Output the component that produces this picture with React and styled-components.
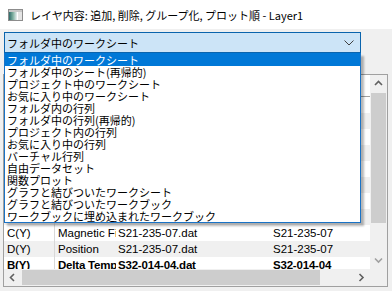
import React from "react";
import styled, { createGlobalStyle } from "styled-components";

const GlobalStyle = createGlobalStyle`
  html, body {
    margin: 0;
    padding: 0;
    background: #f0f0f0;
  }
  body {
    font-family: "Noto Sans CJK JP", "Liberation Sans", sans-serif;
    overflow: hidden;
  }
`;

const options = [
  "フォルダ中のワークシート",
  "フォルダ中のシート(再帰的)",
  "プロジェクト中のワークシート",
  "お気に入り中のワークシート",
  "フォルダ内の行列",
  "フォルダ中の行列(再帰的)",
  "プロジェクト内の行列",
  "お気に入り中の行列",
  "バーチャル行列",
  "自由データセット",
  "関数プロット",
  "グラフと結びついたワークシート",
  "グラフと結びついたワークブック",
  "ワークブックに埋め込まれたワークブック",
];

const rows = [
  ["A(X)", "Time", "S21-235-05.dat", "S21-235-05"],
  ["B(Y)", "Delta Temp", "S21-235-05.dat", "S21-235-05"],
  ["C(Y)", "Magnetic Field", "S21-235-05.dat", "S21-235-05"],
  ["D(Y)", "Position", "S21-235-05.dat", "S21-235-05"],
  ["A(X)", "Time", "S21-235-06.dat", "S21-235-06"],
  ["B(Y)", "Delta Temp", "S21-235-06.dat", "S21-235-06"],
  ["A(X)", "Time", "S21-235-07.dat", "S21-235-07"],
  ["B(Y)", "Delta Temp", "S21-235-07.dat", "S21-235-07"],
  ["C(Y)", "Magnetic Field", "S21-235-07.dat", "S21-235-07"],
  ["D(Y)", "Position", "S21-235-07.dat", "S21-235-07"],
  ["B(Y)", "Delta Temp", "S32-014-04.dat", "S32-014-04", true],
];

const Window = styled.div`
  width: 392px;
  height: 291px;
  display: flex;
  flex-direction: column;
`;

const TitleBar = styled.div`
  height: 29px;
  background: #ffffff;
  display: flex;
  align-items: center;
  gap: 7px;
  padding-left: 8px;
  font-size: 11px;
  color: #000;
`;

const Body = styled.div`
  flex: 1;
  display: flex;
  flex-direction: column;
  padding: 3px 3px 0 3px;
  gap: 21px;
`;

const ComboWrap = styled.div`
  position: relative;
  margin: 0 28px 0 1px;
  z-index: 2;
`;

const Combo = styled.div`
  height: 19px;
  border: 1px solid #0a64ad;
  background: #cce4f7;
  display: flex;
  align-items: center;
  justify-content: space-between;
  padding: 0 6px 0 2px;
  font-size: 11px;
  color: #000;
`;

const DropList = styled.ul`
  position: absolute;
  top: 100%;
  left: 0;
  right: 0;
  margin: 0;
  padding: 0;
  list-style: none;
  background: #fff;
  border: 1px solid #1a73c6;
  border-top-color: #0078d7;
  box-shadow: 3px 3px 2px rgba(0, 0, 0, 0.28);
`;

const Option = styled.li`
  height: 12px;
  line-height: 12px;
  font-size: 11px;
  padding-left: 2px;
  white-space: nowrap;
  color: ${(p) => (p.$active ? "#fff" : "#000")};
  background: ${(p) => (p.$active ? "#0078d7" : "transparent")};
`;

const TableFrame = styled.div`
  height: 211px;
  margin-right: 1px;
  border: 1px solid #a0a0a0;
  background: #fff;
  display: grid;
  grid-template-columns: 1fr 17px;
  grid-template-rows: 1fr 17px;
`;

const Viewport = styled.div`
  overflow: hidden;
  font-family: "Liberation Sans", "Noto Sans CJK JP", sans-serif;
  font-size: 11.5px;
`;

const Header = styled.div`
  height: 21px;
  border-bottom: 1px solid #a0a0a0;
  background: #fff;
`;

const Row = styled.div`
  height: 16px;
  display: grid;
  grid-template-columns: 51px 61px 155px 1fr;
  align-items: center;
  background: ${(p) => (p.$alt ? "#f0f0f0" : "#fff")};
  font-weight: ${(p) => (p.$bold ? 700 : 400)};
  letter-spacing: ${(p) => (p.$bold ? "-0.2px" : "0")};
  color: #000;
`;

const Cell = styled.div`
  height: 16px;
  line-height: 16px;
  padding-left: ${(p) => p.$pad || 3}px;
  white-space: nowrap;
  overflow: hidden;
  border-right: ${(p) => (p.$divider ? "1px solid #d8d8d8" : "none")};
`;

const VScroll = styled.div`
  background: #f0f0f0;
  display: flex;
  flex-direction: column;
`;

const HScroll = styled.div`
  background: #f0f0f0;
  display: flex;
  align-items: center;
`;

const Arrow = styled.div`
  width: 17px;
  height: 17px;
  flex: none;
  display: flex;
  align-items: center;
  justify-content: center;
`;

const VThumb = styled.div`
  height: 130px;
  margin: 1px 1px 0 1px;
  background: #cdcdcd;
`;

const Track = styled.div`
  flex: 1;
`;

const HThumb = styled.div`
  width: 298px;
  height: 15px;
  margin-left: 1px;
  background: #cdcdcd;
`;

const Corner = styled.div`
  background: #f0f0f0;
`;

const Chevron = ({ dir, color = "#606060" }) => {
  const pts = {
    up: "1,5 4.5,1.5 8,5",
    down: "1,1.5 4.5,5 8,1.5",
    left: "5,1 1.5,4.5 5,8",
    right: "1.5,1 5,4.5 1.5,8",
  }[dir];
  const horiz = dir === "left" || dir === "right";
  return (
    <svg width={horiz ? 7 : 9} height={horiz ? 9 : 7} viewBox={horiz ? "0 0 7 9" : "0 0 9 7"}>
      <polyline points={pts} fill="none" stroke={color} strokeWidth="1.6" />
    </svg>
  );
};

const AppIcon = () => (
  <svg width="15" height="12" viewBox="0 0 15 12">
    <defs>
      <linearGradient id="ig" x1="0" y1="0" x2="1" y2="0">
        <stop offset="0" stopColor="#2f6a6a" />
        <stop offset="0.5" stopColor="#7fb0a0" />
        <stop offset="1" stopColor="#e8eef0" />
      </linearGradient>
    </defs>
    <rect x="0.5" y="0.5" width="14" height="11" fill="#fff" stroke="#8c8c8c" />
    <rect x="1" y="1" width="13" height="2" fill="#c8c8c8" />
    <rect x="1" y="3" width="8" height="8" fill="url(#ig)" />
    <rect x="10" y="3" width="4" height="8" fill="#e4e4e4" />
  </svg>
);

export default function App() {
  return (
    <Window>
      <GlobalStyle />
      <TitleBar>
        <AppIcon />
        <span>レイヤ内容: 追加, 削除, グループ化, プロット順 - Layer1</span>
      </TitleBar>
      <Body>
        <ComboWrap>
          <Combo>
            <span>{options[0]}</span>
            <svg width="10" height="6" viewBox="0 0 10 6">
              <polyline points="0.5,0.5 5,5 9.5,0.5" fill="none" stroke="#404040" strokeWidth="1" />
            </svg>
          </Combo>
          <DropList>
            {options.map((o, i) => (
              <Option key={o} $active={i === 0}>
                {o}
              </Option>
            ))}
          </DropList>
        </ComboWrap>
        <TableFrame>
          <Viewport>
            <Header />
            {rows.map((r, i) => (
              <Row key={i} $alt={i % 2 === 1} $bold={r[4]}>
                <Cell $divider>{r[0]}</Cell>
                <Cell>{r[1]}</Cell>
                <Cell $pad={2}>{r[2]}</Cell>
                <Cell $pad={2}>{r[3]}</Cell>
              </Row>
            ))}
          </Viewport>
          <VScroll>
            <Arrow>
              <Chevron dir="up" />
            </Arrow>
            <VThumb />
            <Track />
            <Arrow>
              <Chevron dir="down" color="#a0a0a0" />
            </Arrow>
          </VScroll>
          <HScroll>
            <Arrow>
              <Chevron dir="left" />
            </Arrow>
            <HThumb />
            <Track />
            <Arrow>
              <Chevron dir="right" />
            </Arrow>
          </HScroll>
          <Corner />
        </TableFrame>
      </Body>
    </Window>
  );
}
